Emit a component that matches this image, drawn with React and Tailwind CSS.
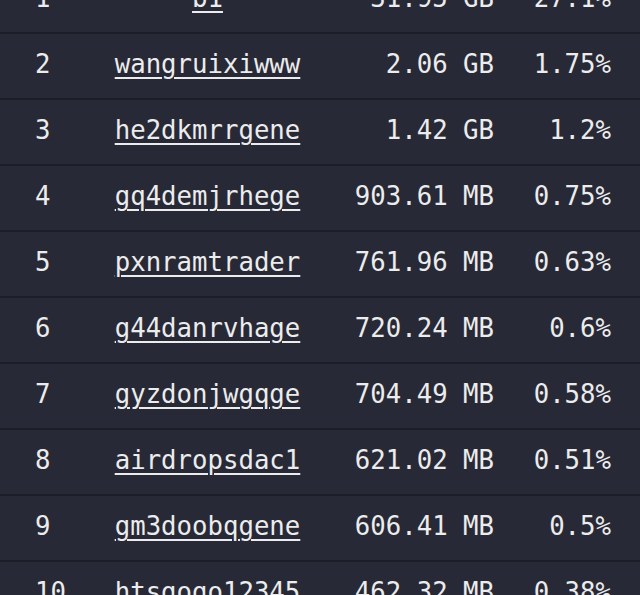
import React from "react";

const rows = [
  ["1", "b1", "31.95 GB", "27.1%"],
  ["2", "wangruixiwww", "2.06 GB", "1.75%"],
  ["3", "he2dkmrrgene", "1.42 GB", "1.2%"],
  ["4", "gq4demjrhege", "903.61 MB", "0.75%"],
  ["5", "pxnramtrader", "761.96 MB", "0.63%"],
  ["6", "g44danrvhage", "720.24 MB", "0.6%"],
  ["7", "gyzdonjwgqge", "704.49 MB", "0.58%"],
  ["8", "airdropsdac1", "621.02 MB", "0.51%"],
  ["9", "gm3doobqgene", "606.41 MB", "0.5%"],
  ["10", "htsgogo12345", "462.32 MB", "0.38%"],
];

export default function App() {
  return (
    <div className="w-[640px] h-[595px] overflow-hidden bg-[#272835] font-['DejaVu_Sans_Mono',monospace] text-[25.7px] text-[#ececec]">
      <div className="-mt-[32px] flex flex-col">
        {rows.map((r) => (
          <div key={r[0]} className="flex h-[66px] items-center border-b-2 border-[#1c1d26] bg-[#282936] pb-[3px]">
            <div className="w-[80px] pl-[35px]">{r[0]}</div>
            <div className="w-[255px] text-center">
              <a className="underline decoration-2 underline-offset-[4px]">{r[1]}</a>
            </div>
            <div className="w-[159px] text-right">{r[2]}</div>
            <div className="w-[117px] text-right">{r[3]}</div>
          </div>
        ))}
      </div>
    </div>
  );
}
